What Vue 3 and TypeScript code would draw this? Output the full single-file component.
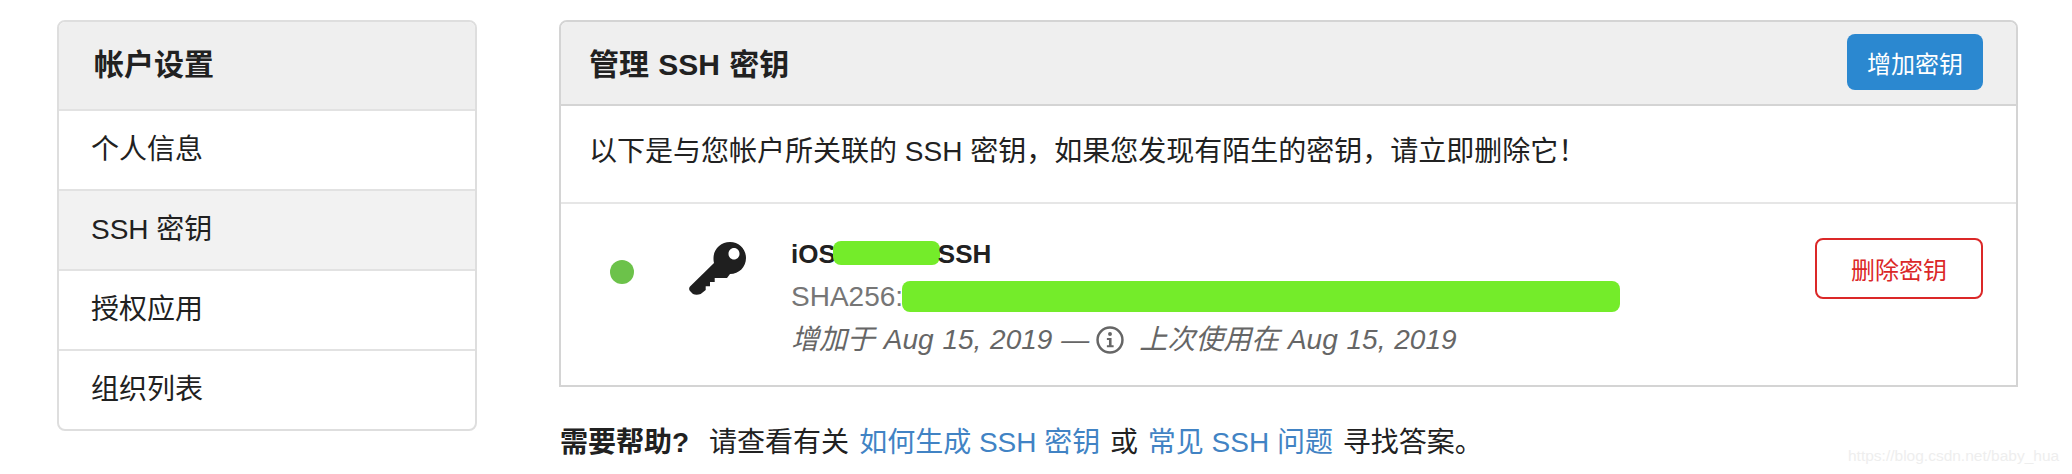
<script setup lang="ts">
const menu = [
  { label: '个人信息', active: false },
  { label: 'SSH 密钥', active: true },
  { label: '授权应用', active: false },
  { label: '组织列表', active: false },
];
</script>

<template>
  <div class="page">
    <aside class="sidebar">
      <div class="sidebar-title">帐户设置</div>
      <a v-for="item in menu" :key="item.label" class="menu-item" :class="{ active: item.active }">{{ item.label }}</a>
    </aside>

    <main class="main">
      <section class="panel">
        <header class="panel-head">
          <h4>管理 SSH 密钥</h4>
          <button class="btn-add">增加密钥</button>
        </header>
        <p class="intro">以下是与您帐户所关联的 SSH 密钥，如果您发现有陌生的密钥，请立即删除它！</p>
        <div class="key-row">
          <span class="dot"></span>
          <svg class="key-icon" width="58" height="54" viewBox="0 0 58 54">
            <path
              fill="#1f1f1f"
              fill-rule="evenodd"
              d="M41 0C50 0 57 7 57 16C57 25 50 32 41 32L38 36H33L28 36L25.7 36V40H21V44.3H16.7V48L11.7 52C9 53 6 53 4 52L1 49C-0.3 47.500 0 45.500 1 44.500L25 21C24.500 19 24.500 17.500 24.500 16C24.500 7 32 0 41 0ZM45 6C41.800 6 39.500 8.500 39.500 11.700C39.500 15 41.800 17.500 45 17.500C48.200 17.500 50.500 15 50.500 11.700C50.500 8.500 48.200 6 45 6Z"
            />
          </svg>
          <div class="key-text">
            <div class="key-name">iOS<span class="mask mask-name"></span>SSH</div>
            <div class="key-hash">SHA256:<span class="mask mask-hash"></span></div>
            <div class="key-date">
              <span>增加于 Aug 15, 2019 —</span>
              <svg class="info-icon" width="28" height="28" viewBox="0 0 27 27">
                <circle cx="13.500" cy="13.500" r="12" fill="none" stroke="#666" stroke-width="2.400" />
                <circle cx="13.500" cy="7.800" r="1.900" fill="#666" />
                <path d="M10.500 11.500H15V18.500H17V20.500H10.500V18.500H12.500V13.500H10.500Z" fill="#666" />
              </svg>
              <span>上次使用在 Aug 15, 2019</span>
            </div>
          </div>
          <button class="btn-del">删除密钥</button>
        </div>
      </section>
      <p class="help">
        <strong>需要帮助?</strong>
        <span class="help-gap">请查看有关</span>
        <a class="first">如何生成 SSH 密钥</a> 或 <a>常见 SSH 问题</a> 寻找答案。
      </p>
    </main>
    <span class="watermark">https://blog.csdn.net/baby_hua</span>
  </div>
</template>

<style scoped>
.page {
  position: relative;
  display: flex;
  align-items: flex-start;
  gap: 82px;
  width: 2072px;
  height: 474px;
  box-sizing: border-box;
  padding: 20px 0 0 57px;
  overflow: hidden;
  background: #fff;
  color: #212121;
  font-family: "Liberation Sans", "Noto Sans CJK SC", sans-serif;
  font-size: 28px;
}

.sidebar {
  width: 420px;
  box-sizing: border-box;
  border: 2px solid #dedede;
  border-radius: 8px;
  overflow: hidden;
}

.sidebar-title {
  height: 89px;
  box-sizing: border-box;
  padding-left: 35px;
  background: #efefef;
  font-size: 30px;
  font-weight: 700;
  line-height: 86px;
  border-bottom: 2px solid #e2e2e2;
}

.menu-item {
  display: block;
  height: 80px;
  box-sizing: border-box;
  padding-left: 32px;
  line-height: 78px;
  border-bottom: 2px solid #e2e2e2;
}

.menu-item:last-child {
  height: 78px;
  border-bottom: none;
}

.menu-item.active {
  background: #f2f2f2;
}

.main {
  width: 1459px;
}

.panel {
  height: 367px;
  box-sizing: border-box;
  border: 2px solid #d4d4d4;
  border-radius: 8px 8px 0 0;
}

.panel-head {
  display: flex;
  align-items: center;
  justify-content: space-between;
  height: 84px;
  box-sizing: border-box;
  padding: 0 33px 0 28px;
  background: #efefef;
  border-bottom: 2px solid #d4d4d4;
  border-radius: 6px 6px 0 0;
}

.panel-head h4 {
  margin: 0 0 3px;
  font-size: 30px;
  font-weight: 700;
  word-spacing: 1px;
}

.btn-add {
  width: 136px;
  height: 56px;
  margin-bottom: 2px;
  padding: 0;
  border: none;
  border-radius: 8px;
  background: #2b88d0;
  color: #fff;
  font: inherit;
  font-size: 24px;
}

.intro {
  height: 98px;
  box-sizing: border-box;
  margin: 0;
  padding-left: 28px;
  line-height: 92px;
  border-bottom: 2px solid #e6e6e6;
}

.key-row {
  display: flex;
  align-items: flex-start;
  padding: 36px 33px 0 49px;
}

.dot {
  flex: none;
  width: 24px;
  height: 24px;
  margin-top: 20px;
  border-radius: 50%;
  background: #6cc24a;
}

.key-icon {
  flex: none;
  margin-left: 55px;
  margin-top: 2px;
}

.key-text {
  flex: 1;
  margin-left: 44px;
  line-height: 43px;
}

.key-name {
  display: flex;
  align-items: center;
  height: 30px;
  margin-top: -1px;
  font-size: 26px;
  font-weight: 700;
}

.mask {
  display: inline-block;
  background: #74ec2a;
  border-radius: 8px;
}

.mask-name {
  width: 107px;
  height: 24px;
  margin: -3px -2px 0 -3px;
}

.key-hash {
  display: flex;
  align-items: center;
  height: 44px;
  margin-top: 5px;
  color: #767676;
}

.mask-hash {
  width: 718px;
  height: 31px;
  margin-left: -1px;
}

.key-date {
  display: flex;
  align-items: center;
  gap: 7px;
  color: #666;
  font-style: italic;
  font-size: 28px;
  word-spacing: 1px;
  white-space: nowrap;
}

.info-icon {
  flex: none;
  margin-right: 8px;
}

.btn-del {
  flex: none;
  width: 168px;
  height: 61px;
  margin-top: -2px;
  padding: 0;
  border: 2px solid #db2828;
  border-radius: 8px;
  background: #fff;
  color: #db2828;
  font: inherit;
  font-size: 24px;
}

.help {
  margin: 36px 0 0;
  padding-left: 1px;
  line-height: 40px;
  white-space: nowrap;
}

.help strong {
  font-weight: 700;
}

.help-gap {
  margin-left: 20px;
}

.help a {
  margin: 0 2px;
  color: #4183c4;
}

.help a.first {
  margin-left: 10px;
}

.watermark {
  position: absolute;
  left: 1848px;
  top: 444px;
  color: #eeeeee;
  font-size: 15.500px;
  line-height: 24px;
}
</style>
